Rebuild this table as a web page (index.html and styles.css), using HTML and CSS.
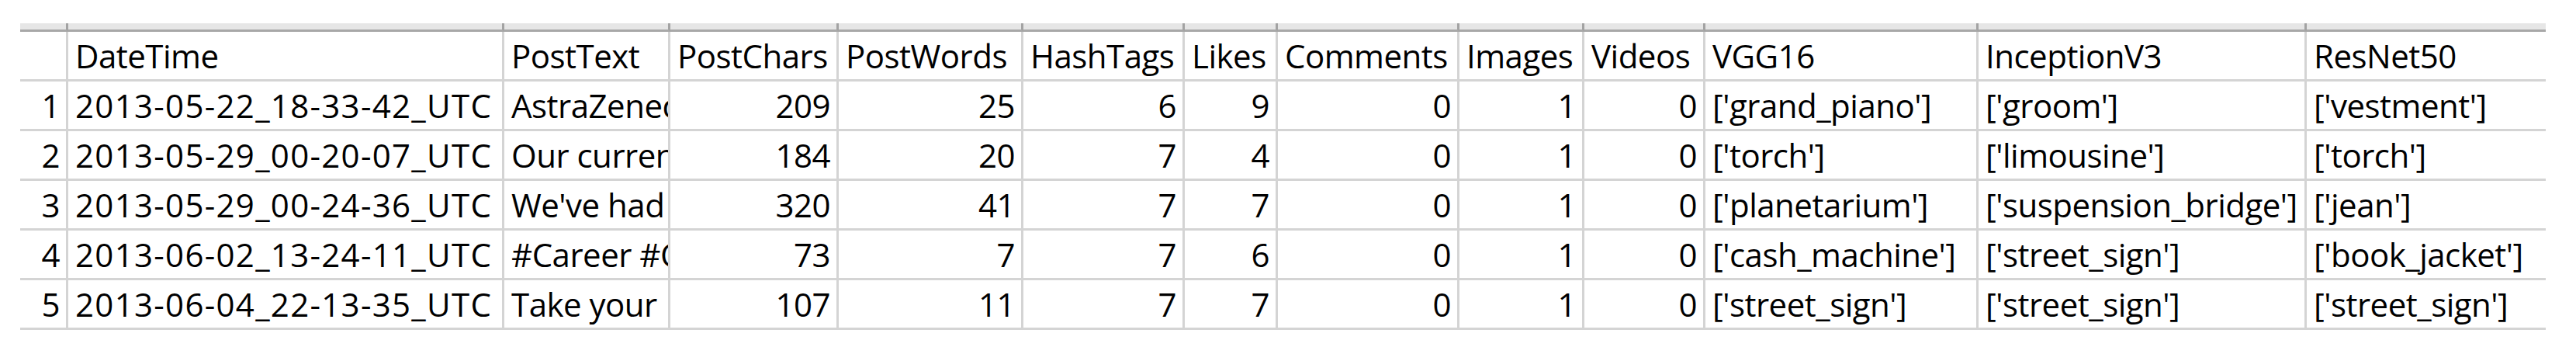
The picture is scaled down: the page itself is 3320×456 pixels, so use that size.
FILE: index.html
```html
<!DOCTYPE html>
<html lang="en">
<head>
<meta charset="utf-8">
<title>Sheet</title>
<link rel="stylesheet" href="styles.css">
</head>
<body>
<div class="page">
  <div class="sheet">
    <div class="strip"></div><div class="strip"></div><div class="strip"></div><div class="strip"></div><div class="strip"></div><div class="strip"></div><div class="strip"></div><div class="strip"></div><div class="strip"></div><div class="strip"></div><div class="strip"></div><div class="strip"></div><div class="strip last"></div>

    <div class="c"></div>
    <div class="c">DateTime</div>
    <div class="c">PostText</div>
    <div class="c">PostChars</div>
    <div class="c">PostWords</div>
    <div class="c">HashTags</div>
    <div class="c">Likes</div>
    <div class="c">Comments</div>
    <div class="c">Images</div>
    <div class="c">Videos</div>
    <div class="c">VGG16</div>
    <div class="c">InceptionV3</div>
    <div class="c last">ResNet50</div>

    <div class="c n">1</div>
    <div class="c dt">2013-05-22_18-33-42_UTC</div>
    <div class="c clip">AstraZeneca is hiring! Apply today</div>
    <div class="c n">209</div>
    <div class="c n">25</div>
    <div class="c n">6</div>
    <div class="c n">9</div>
    <div class="c n">0</div>
    <div class="c n">1</div>
    <div class="c n">0</div>
    <div class="c">['grand_piano']</div>
    <div class="c">['groom']</div>
    <div class="c last">['vestment']</div>

    <div class="c n">2</div>
    <div class="c dt">2013-05-29_00-20-07_UTC</div>
    <div class="c clip">Our current openings</div>
    <div class="c n">184</div>
    <div class="c n">20</div>
    <div class="c n">7</div>
    <div class="c n">4</div>
    <div class="c n">0</div>
    <div class="c n">1</div>
    <div class="c n">0</div>
    <div class="c">['torch']</div>
    <div class="c">['limousine']</div>
    <div class="c last">['torch']</div>

    <div class="c n">3</div>
    <div class="c dt">2013-05-29_00-24-36_UTC</div>
    <div class="c clip">We've had a great week</div>
    <div class="c n">320</div>
    <div class="c n">41</div>
    <div class="c n">7</div>
    <div class="c n">7</div>
    <div class="c n">0</div>
    <div class="c n">1</div>
    <div class="c n">0</div>
    <div class="c">['planetarium']</div>
    <div class="c">['suspension_bridge']</div>
    <div class="c last">['jean']</div>

    <div class="c n">4</div>
    <div class="c dt">2013-06-02_13-24-11_UTC</div>
    <div class="c clip">#Career #Opportunity</div>
    <div class="c n">73</div>
    <div class="c n">7</div>
    <div class="c n">7</div>
    <div class="c n">6</div>
    <div class="c n">0</div>
    <div class="c n">1</div>
    <div class="c n">0</div>
    <div class="c">['cash_machine']</div>
    <div class="c">['street_sign']</div>
    <div class="c last">['book_jacket']</div>

    <div class="c n">5</div>
    <div class="c dt">2013-06-04_22-13-35_UTC</div>
    <div class="c clip">Take your&nbsp;&nbsp; career</div>
    <div class="c n">107</div>
    <div class="c n">11</div>
    <div class="c n">7</div>
    <div class="c n">7</div>
    <div class="c n">0</div>
    <div class="c n">1</div>
    <div class="c n">0</div>
    <div class="c">['street_sign']</div>
    <div class="c">['street_sign']</div>
    <div class="c last">['street_sign']</div>
  </div>
</div>
</body>
</html>
```

FILE: styles.css
```css
html, body {
  margin: 0;
  padding: 0;
  background: #ffffff;
}

.page {
  padding: 30px 0 0 26px;
}

.sheet {
  display: grid;
  width: 3255px;
  grid-template-columns: 62px 562px 214px 217px 238px 208px 120px 234px 161px 156px 352px 423px 308px;
  grid-template-rows: 11px repeat(6, 64px);
  font-family: "Open Sans", "Liberation Sans", sans-serif;
  font-size: 42px;
  letter-spacing: -0.5px;
  color: #000000;
}

.strip {
  box-sizing: border-box;
  background: #e6e6e6;
  border-right: 3px solid #a3a3a3;
  border-bottom: 3px solid #a8a8a8;
}

.c {
  box-sizing: border-box;
  border-right: 3px solid #d4d4d4;
  border-bottom: 3px solid #d4d4d4;
  line-height: 61px;
  padding: 0 8px 0 9px;
  white-space: nowrap;
  overflow: hidden;
}

.dt {
  letter-spacing: 1.3px;
}

.clip {
  padding-right: 0;
}

.n {
  text-align: right;
}

.last {
  border-right: none;
}
```
